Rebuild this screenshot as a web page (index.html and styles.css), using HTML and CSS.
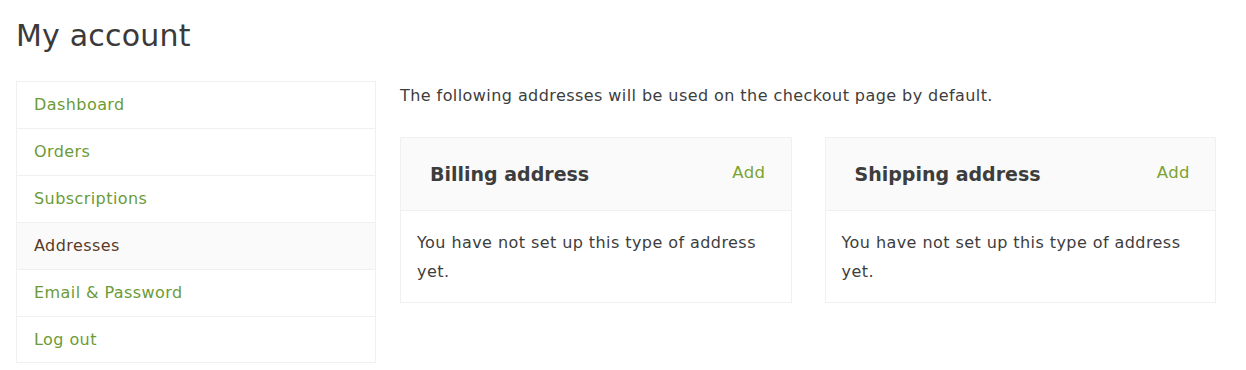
FILE: index.html
```html
<!DOCTYPE html>
<html lang="en">
<head>
    <meta charset="UTF-8">
    <meta name="viewport" content="width=device-width, initial-scale=1.0">
    <title>My account</title>
    <link rel="stylesheet" href="styles.css">
</head>
<body>
    <div class="page">
        <h1 class="page-title">My account</h1>
        <div class="account">
            <nav class="account-nav">
                <a href="#" class="nav-item">Dashboard</a>
                <a href="#" class="nav-item">Orders</a>
                <a href="#" class="nav-item">Subscriptions</a>
                <a href="#" class="nav-item active">Addresses</a>
                <a href="#" class="nav-item">Email &amp; Password</a>
                <a href="#" class="nav-item">Log out</a>
            </nav>
            <div class="account-content">
                <p class="intro">The following addresses will be used on the checkout page by default.</p>
                <div class="addresses">
                    <div class="address-box">
                        <div class="address-head">
                            <h3>Billing address</h3>
                            <a href="#" class="add-link">Add</a>
                        </div>
                        <div class="address-body">You have not set up this type of address yet.</div>
                    </div>
                    <div class="address-box">
                        <div class="address-head">
                            <h3>Shipping address</h3>
                            <a href="#" class="add-link">Add</a>
                        </div>
                        <div class="address-body">You have not set up this type of address yet.</div>
                    </div>
                </div>
            </div>
        </div>
    </div>
</body>
</html>
```

FILE: styles.css
```css
body {
    font-family: "DejaVu Sans", sans-serif;
    margin: 0;
    color: #3d3d3d;
    background: #fff;
    letter-spacing: 0.43px;
}
.page {
    padding: 18px 16px 0 16px;
}
.page-title {
    font-size: 30px;
    font-weight: 400;
    margin: 0 0 27px 0;
    line-height: 36px;
    color: #3a3a3a;
    letter-spacing: 0.2px;
}
.account {
    display: flex;
    gap: 24px;
}
.account-nav {
    width: 360px;
    box-sizing: border-box;
    border: 1px solid #eef0f2;
    display: flex;
    flex-direction: column;
    align-self: flex-start;
}
.nav-item {
    display: block;
    height: 46px;
    line-height: 46px;
    padding: 0 17px;
    font-size: 16px;
    color: #6b9b37;
    text-decoration: none;
    border-bottom: 1px solid #eef0f2;
}
.nav-item:last-child {
    border-bottom: none;
    height: 45px;
}
.nav-item.active {
    background: #fafafa;
    color: #5b3a26;
}
.account-content {
    width: 816px;
}
.intro {
    margin: 4px 0 30px 0;
    font-size: 16px;
    line-height: 22px;
}
.addresses {
    display: flex;
    gap: 33px;
}
.address-box {
    flex: 1;
    border: 1px solid #eef0f2;
}
.address-head {
    display: flex;
    justify-content: space-between;
    align-items: center;
    height: 72px;
    padding: 0 25px 0 29px;
    background: #fafafa;
    border-bottom: 1px solid #eef0f2;
}
.address-head h3 {
    margin: 0;
    font-size: 19px;
    font-weight: 700;
    color: #3d3d3d;
    letter-spacing: 0;
}
.add-link {
    font-size: 16.5px;
    color: #7aa32f;
    text-decoration: none;
    margin-top: -3px;
}
.address-body {
    padding: 17px 16px 16px 16px;
    font-size: 16px;
    line-height: 29px;
}
```
